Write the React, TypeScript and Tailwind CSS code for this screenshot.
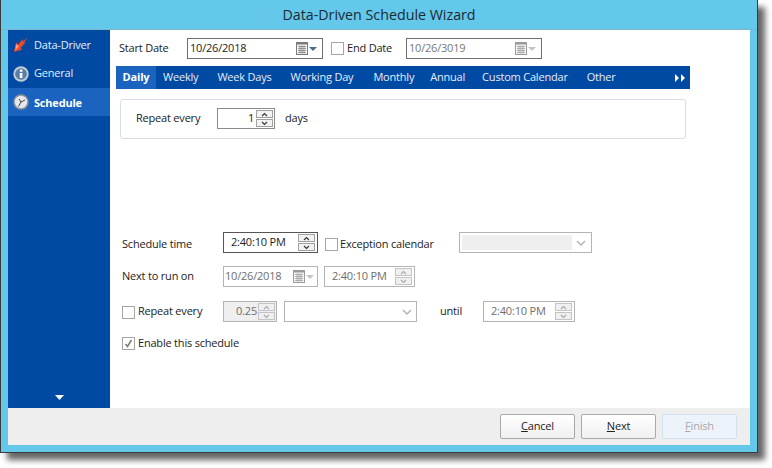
import React from "react";

function Chevron({ up, color = "#333" }: { up?: boolean; color?: string }) {
  return (
    <svg width="7" height="5" viewBox="0 0 7 5">
      <path d={up ? "M1 4 L3.5 1.5 L6 4" : "M1 1 L3.5 3.5 L6 1"} fill="none" stroke={color} strokeWidth="1.1" />
    </svg>
  );
}

function Spin({ disabled }: { disabled?: boolean }) {
  const btn = disabled ? "border-[#c4c4c4] bg-[#f0f0f0]" : "border-[#a0a0a0] bg-[#f2f2f2]";
  const c = disabled ? "#aaa" : "#333";
  return (
    <div className="flex flex-col gap-[1px] w-[17px] shrink-0">
      <div className={`h-[8px] border ${btn} flex items-center justify-center`}><Chevron up color={c} /></div>
      <div className={`h-[8px] border ${btn} flex items-center justify-center`}><Chevron color={c} /></div>
    </div>
  );
}

function Cal({ disabled }: { disabled?: boolean }) {
  const s = disabled ? "#9a9a9a" : "#7a7a7a";
  return (
    <svg width="12" height="13" viewBox="0 0 12 13" className="shrink-0">
      <rect x="0.5" y="0.5" width="11" height="12" fill="#f4f4f4" stroke={s} />
      <rect x="0.5" y="0.5" width="11" height="2" fill={s} />
      <path d="M2 4.5h8M2 6.5h8M2 8.5h8M2 10.5h8M4 3.5v8M6 3.5v8M8 3.5v8" stroke={s} strokeWidth="0.7" fill="none" />
    </svg>
  );
}

function Down({ color, w = 8, h = 4 }: { color: string; w?: number; h?: number }) {
  return (
    <svg width={w} height={h} viewBox="0 0 9 5" preserveAspectRatio="none" className="shrink-0">
      <path d="M0 0 H9 L4.5 5 Z" fill={color} />
    </svg>
  );
}

function Check({ checked, offset = "" }: { checked?: boolean; offset?: string }) {
  return (
    <div className={`w-[13px] h-[13px] border border-[#a6a6a6] bg-white shrink-0 flex items-center justify-center ${offset}`}>
      {checked && (
        <svg width="9" height="9" viewBox="0 0 9 9">
          <path d="M1.5 5 L3.5 7.5 L7.5 1" fill="none" stroke="#777" strokeWidth="1.5" />
        </svg>
      )}
    </div>
  );
}

function ComboChevron() {
  return (
    <svg width="10" height="6" viewBox="0 0 10 6" className="shrink-0">
      <path d="M1 1 L5 5 L9 1" fill="none" stroke="#b5b5b5" strokeWidth="1.5" />
    </svg>
  );
}

function TimeBox({ w }: { w: string }) {
  return (
    <div className={`${w} h-[21px] border border-[#b4b4b4] flex items-center pl-[7px] pr-[2px] text-[#6d6d6d] justify-between`}>
      <span>2:40:10 PM</span>
      <Spin disabled />
    </div>
  );
}

const tabs = ["Weekly", "Week Days", "Working Day", "Monthly", "Annual", "Custom Calendar", "Other"];
const tabMargins = ["ml-[7px]", "ml-[19px]", "ml-[19px]", "ml-[20px]", "ml-[16px]", "ml-[17px]", "ml-[19px]"];

export default function App() {
  return (
    <div className="w-[772px] h-[468px] bg-white text-[11px] text-[#222]" style={{ fontFamily: '"Open Sans","Noto Sans",sans-serif', letterSpacing: "-0.2px" }}>
      <div className="w-[758px] h-[453px] border-x border-b border-[#3a3a3a] bg-[#63c8ea] flex flex-col shadow-[7px_7px_6px_rgba(0,0,0,0.6)]">
        <div className="h-[30px] shrink-0 flex items-center justify-center text-[14.25px] text-[#1c2b33] border-b border-[#7fb5c8]" style={{ letterSpacing: "0px" }}>
          Data-Driven Schedule Wizard
        </div>
        <div className="flex-1 mx-[7px] mb-[7px] flex flex-col min-h-0">
          <div className="flex flex-1 min-h-0">
            <aside className="w-[102px] bg-[#004aa3] flex flex-col text-white font-normal">
              <div className="h-[29px] flex items-center pl-[5px] gap-[5px]">
                <svg width="16" height="16" viewBox="0 0 16 16">
                  <path d="M15 0.5 L9.5 4.5 L10 2 L5 7.5 L3 5.5 L1 15 L9.5 12.5 L7.5 11 L13 5 L10.8 5.6 Z" fill="#ea4a2c" />
                  <path d="M3.2 7 L2.2 13.6 L6 9.5 Z" fill="#ff9a80" />
                </svg>
                <span className="text-[#e6eefa] pt-[2px]">Data-Driver</span>
              </div>
              <div className="h-[29px] flex items-center pl-[5px] gap-[5px]">
                <svg width="16" height="16" viewBox="0 0 16 16">
                  <circle cx="8" cy="8" r="7.7" fill="#c3ccd4" />
                  <circle cx="8" cy="8" r="5.8" fill="#5a7fa6" />
                  <rect x="6.8" y="7" width="2.6" height="5" fill="#fff" />
                  <rect x="6.8" y="3.6" width="2.6" height="2.2" fill="#fff" />
                </svg>
                <span className="text-[#e6eefa]">General</span>
              </div>
              <div className="h-[28px] bg-[#1a63bf] flex items-center pl-[5px] gap-[5px]">
                <svg width="16" height="16" viewBox="0 0 16 16">
                  <circle cx="8" cy="8" r="7.7" fill="#8d9499" />
                  <circle cx="8" cy="8" r="6.2" fill="#e6e8ea" />
                  <path d="M8 8 L12 6 M8 8 L5.5 12.5 M8 8 L6 5" stroke="#444" strokeWidth="1" fill="none" />
                </svg>
                <span className="font-bold text-white pt-[2px]">Schedule</span>
              </div>
              <div className="mt-auto mb-[8px] ml-[47px] flex">
                <Down color="#ffffff" w={9} h={5} />
              </div>
            </aside>
            <main className="flex-1 bg-white pl-[6px] pt-[8px]">
              <div className="h-[21px] flex items-center">
                <span className="ml-[3px] w-[68px]">Start Date</span>
                <div className="w-[136px] h-[21px] border border-[#6e6e6e] flex items-center pl-[2px] pr-[5px] text-[#222]">
                  <span className="flex-1">10/26/2018</span>
                  <Cal />
                  <span className="ml-[1px] flex"><Down color="#4a6a96" /></span>
                </div>
                <div className="ml-[8px]"><Check /></div>
                <span className="ml-[3px] w-[59px]">End Date</span>
                <div className="w-[136px] h-[21px] border border-[#6e6e6e] flex items-center pl-[2px] pr-[5px] text-[#777]">
                  <span className="flex-1">10/26/3019</span>
                  <Cal disabled />
                  <span className="ml-[1px] flex"><Down color="#c4c4c4" /></span>
                </div>
              </div>
              <div className="mt-[7px] w-[574px] h-[23px] bg-[#004aa3] flex items-center text-[#e6eefa]">
                <div className="w-[40px] h-full bg-[#1a63bf] flex items-center justify-center font-bold text-white">Daily</div>
                {tabs.map((t, i) => (
                  <span key={t} className={tabMargins[i]}>{t}</span>
                ))}
                <div className="ml-auto mr-[5px] flex gap-[2px]">
                  {[0, 1].map((k) => (
                    <svg key={k} width="4" height="8" viewBox="0 0 4 8"><path d="M0 0 L4 4 L0 8 Z" fill="#fff" /></svg>
                  ))}
                </div>
              </div>
              <div className="mt-[10px] ml-[4px] w-[566px] h-[40px] border border-[#d5dee6] rounded-[3px] flex items-center">
                <span className="ml-[15px] w-[81px] -mt-[2px]">Repeat every</span>
                <div className="w-[58px] h-[21px] border border-[#8a8a8a] flex items-center justify-end pr-[1px] -mt-[1px]">
                  <span className="mr-[2px]">1</span>
                  <Spin />
                </div>
                <span className="ml-[10px] -mt-[2px]">days</span>
              </div>

              <div className="mt-[93px] h-[21px] flex items-center ml-[6px]">
                <span className="w-[101px] mt-[3px]">Schedule time</span>
                <div className="w-[95px] h-[21px] border border-[#555] flex items-center pl-[7px] pr-[2px] justify-between">
                  <span>2:40:10 PM</span>
                  <Spin />
                </div>
                <div className="ml-[7px]"><Check offset="mt-[3px]" /></div>
                <span className="ml-[2px] w-[119px] mt-[3px]">Exception calendar</span>
                <div className="w-[133px] h-[21px] border border-[#b4b4b4] flex items-center p-[2px] pr-[5px] justify-between">
                  <div className="w-[110px] h-full bg-[#efefef]"></div>
                  <ComboChevron />
                </div>
              </div>
              <div className="mt-[13px] h-[21px] flex items-center ml-[6px] text-[#6d6d6d]">
                <span className="w-[101px] text-[#222]">Next to run on</span>
                <div className="w-[95px] h-[21px] border border-[#b4b4b4] flex items-center pl-[1px] pr-[3px]">
                  <span className="flex-1">10/26/2018</span>
                  <Cal disabled />
                  <span className="ml-[1px] flex"><Down color="#c4c4c4" /></span>
                </div>
                <div className="ml-[6px]"><TimeBox w="w-[91px]" /></div>
              </div>
              <div className="mt-[14px] h-[21px] flex items-center ml-[6px]">
                <Check offset="mt-[2px]" />
                <span className="ml-[3px] w-[85px]">Repeat every</span>
                <div className="w-[54px] h-[21px] border border-[#b4b4b4] bg-[#efefef] flex items-center justify-end text-[#6d6d6d] pr-[1px]">
                  <span className="mr-[1px]">0.25</span>
                  <Spin disabled />
                </div>
                <div className="ml-[7px] w-[133px] h-[21px] border border-[#b4b4b4] flex items-center justify-end pr-[4px]">
                  <ComboChevron />
                </div>
                <span className="ml-[23px] w-[43px]">until</span>
                <TimeBox w="w-[92px]" />
              </div>
              <div className="mt-[13px] flex items-center ml-[6px]">
                <Check checked />
                <span className="ml-[3px]">Enable this schedule</span>
              </div>
            </main>
          </div>
          <footer className="h-[37px] shrink-0 bg-[#eeeeee] flex items-start justify-end pt-[6px] pr-[13px] gap-[6px]">
            <button className="w-[75px] h-[25px] rounded-[2px] border border-[#a9a9a9] bg-gradient-to-b from-white to-[#f0f0f0] text-[#222]"><span className="underline">C</span>ancel</button>
            <button className="w-[75px] h-[25px] rounded-[2px] border border-[#a9a9a9] bg-gradient-to-b from-white to-[#f0f0f0] text-[#222]"><span className="underline">N</span>ext</button>
            <button className="w-[75px] h-[25px] rounded-[2px] border border-[#d3e0ee] bg-[#ecf3fb] text-[#a8a8a8]"><span className="underline">F</span>inish</button>
          </footer>
        </div>
      </div>
    </div>
  );
}
